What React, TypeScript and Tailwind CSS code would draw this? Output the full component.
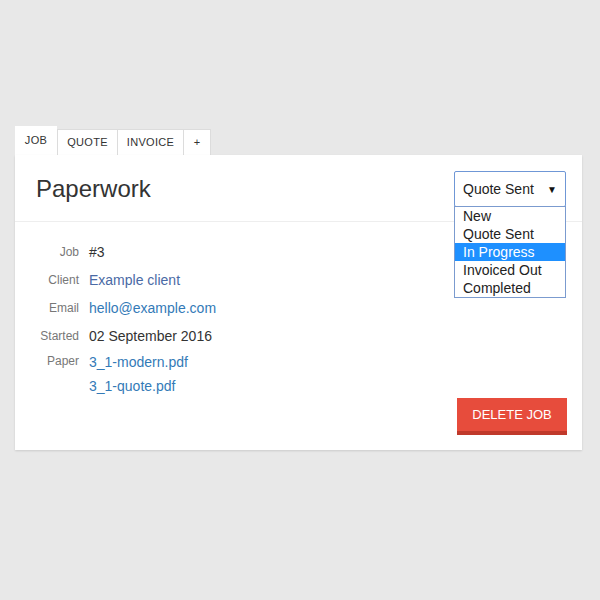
import React from "react";

export default function App() {
  const font = { fontFamily: '"Liberation Sans", Arial, sans-serif' };
  const options = ["New", "Quote Sent", "In Progress", "Invoiced Out", "Completed"];
  return (
    <div className="w-[600px] h-[600px] bg-[#e8e8e8] pt-[126px] pl-[15px]" style={font}>
      <div className="flex items-end h-[29px]">
        <div className="w-[42px] h-[29px] bg-white flex items-center justify-center text-[11px] text-[#333] tracking-[0.3px]">JOB</div>
        <div className="w-[61px] h-[26px] bg-white border-l border-t border-r border-[#dcdcdc] flex items-center justify-center text-[11px] text-[#333] tracking-[0.3px]">QUOTE</div>
        <div className="w-[66px] h-[26px] bg-white border-t border-r border-[#dcdcdc] flex items-center justify-center text-[11px] text-[#333] tracking-[0.3px]">INVOICE</div>
        <div className="w-[27px] h-[26px] bg-white border-t border-r border-[#dcdcdc] flex items-center justify-center text-[11px] text-[#333]">+</div>
      </div>
      <div className="w-[567px] bg-white shadow-[0_1px_2px_rgba(0,0,0,0.12)] relative">
        <div className="flex items-center justify-between h-[67px] pt-[2px] pl-[21px] pr-[16px] border-b border-[#eeeeee]">
          <div className="text-[24px] text-[#333] leading-none">Paperwork</div>
          <div className="relative w-[112px] h-[36px]">
            <div className="w-[112px] h-[36px] border border-[#6f97d6] rounded-[2px] flex items-center justify-between pl-[8px] pr-[8px] text-[14px] text-[#222]">
              <span>Quote Sent</span>
              <span className="text-[10px] text-[#111]">▼</span>
            </div>
            <div className="absolute left-0 top-[35px] w-[112px] border border-[#7b9bcf] bg-white z-10">
              {options.map((o) => (
                <div
                  key={o}
                  className={
                    o === "In Progress"
                      ? "h-[18px] leading-[18px] pl-[8px] text-[14px] bg-[#1e90ff] text-white"
                      : "h-[18px] leading-[18px] pl-[8px] text-[14px] text-[#222]"
                  }
                >
                  {o}
                </div>
              ))}
            </div>
          </div>
        </div>
        <div className="pt-[16px] pb-[15px]">
          <div className="flex items-center h-[28px]">
            <div className="w-[64px] text-right text-[12px] text-[#777]">Job</div>
            <div className="ml-[10px] text-[14px] text-[#333]">#3</div>
          </div>
          <div className="flex items-center h-[28px]">
            <div className="w-[64px] text-right text-[12px] text-[#777]">Client</div>
            <div className="ml-[10px] text-[14px] text-[#4a6aa5]">Example client</div>
          </div>
          <div className="flex items-center h-[28px]">
            <div className="w-[64px] text-right text-[12px] text-[#777]">Email</div>
            <div className="ml-[10px] text-[14px] text-[#337ab7]">hello@example.com</div>
          </div>
          <div className="flex items-center h-[28px]">
            <div className="w-[64px] text-right text-[12px] text-[#777]">Started</div>
            <div className="ml-[10px] text-[14px] text-[#333]">02 September 2016</div>
          </div>
          <div className="flex items-start">
            <div className="w-[64px] text-right text-[12px] leading-[22px] text-[#777]">Paper</div>
            <div className="ml-[10px] text-[14px] text-[#337ab7]">
              <div className="leading-[24px]">3_1-modern.pdf</div>
              <div className="leading-[24px]">3_1-quote.pdf</div>
            </div>
          </div>
          <div className="flex justify-end pr-[15px]">
            <div className="w-[110px] h-[37px] bg-[#e74c3c] border-b-[4px] border-[#c0392b] flex items-center justify-center text-white text-[13px]">
              DELETE JOB
            </div>
          </div>
        </div>
      </div>
    </div>
  );
}
